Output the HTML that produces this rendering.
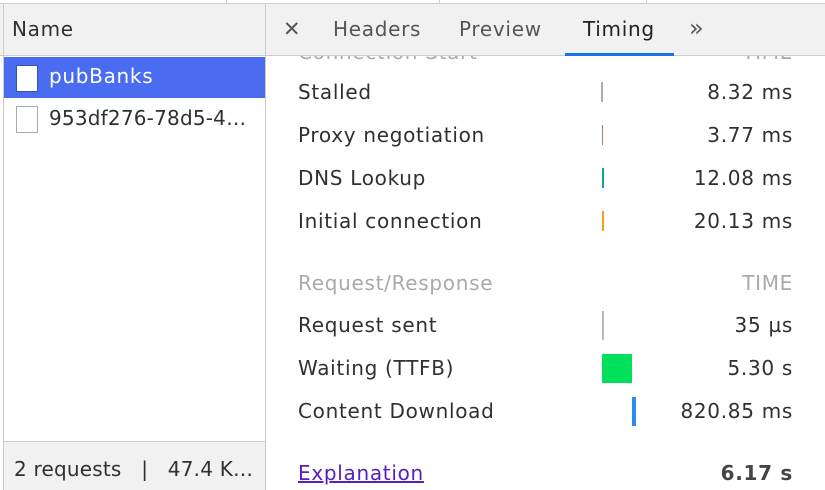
<!DOCTYPE html><html><head><style>
*{margin:0;padding:0;box-sizing:border-box}
body{width:825px;height:490px;overflow:hidden;background:#fff;font-family:"DejaVu Sans","Liberation Sans",sans-serif;font-size:20px;letter-spacing:0.7px;color:#303030;position:relative}
.a{position:absolute;white-space:nowrap}
.r{position:absolute;right:32px;text-align:right;white-space:nowrap}
.bar{position:absolute}
</style></head><body>
<div class="a" style="left:298px;top:40px;color:#aaa">Connection Start</div><div class="r" style="top:40px;color:#aaa">TIME</div>
<div class="a" style="left:0;top:0;width:825px;height:4px;background:#fff;border-bottom:1px solid #ccc"></div>
<div class="a" style="left:226px;top:0;width:1px;height:4px;background:#ccc"></div>
<div class="a" style="left:439px;top:0;width:1px;height:4px;background:#ccc"></div>
<div class="a" style="left:646px;top:0;width:1px;height:4px;background:#ccc"></div>
<div class="a" style="left:0;top:4px;width:825px;height:52px;background:#f1f1f1;border-bottom:1px solid #ccc"></div>
<div class="a" style="left:3px;top:4px;width:1px;height:486px;background:#ccc"></div>
<div class="a" style="left:265px;top:4px;width:1px;height:486px;background:#ccc"></div>
<div class="a" style="left:12px;top:17px">Name</div>
<div class="a" style="left:4px;top:57px;width:261px;height:41px;background:#4a6cf0"></div>
<div class="a" style="left:16px;top:65px;width:22px;height:27px;background:#fff;border:1px solid #3a50b0"></div>
<div class="a" style="left:49px;top:64px;color:#fff">pubBanks</div>
<div class="a" style="left:16px;top:106px;width:22px;height:27px;background:#fff;border:1px solid #aaa"></div>
<div class="a" style="left:49px;top:106px;letter-spacing:0.2px">953df276-78d5-4…</div>
<div class="a" style="left:4px;top:441px;width:261px;height:49px;background:#f1f1f1;border-top:1px solid #ccc"></div>
<div class="a" style="left:14px;top:457px;letter-spacing:0.2px">2 requests &nbsp;&nbsp;| &nbsp;&nbsp;47.4 K…</div>
<div class="a" style="left:283px;top:17px;font-size:21px;color:#555">✕</div>
<div class="a" style="left:333px;top:17px;color:#555">Headers</div>
<div class="a" style="left:459px;top:17px;color:#555">Preview</div>
<div class="a" style="left:583px;top:17px;color:#222">Timing</div>
<div class="a" style="left:565px;top:53px;width:109px;height:3px;background:#1a73e8"></div>
<div class="a" style="left:689px;top:14px;font-size:24px;color:#555">»</div>
<div class="a" style="left:298px;top:80px">Stalled</div><div class="r" style="top:80px">8.32 ms</div>
<div class="bar" style="left:601px;top:82px;width:2px;height:20px;background:#aab"></div>
<div class="a" style="left:298px;top:123px">Proxy negotiation</div><div class="r" style="top:123px">3.77 ms</div>
<div class="bar" style="left:602px;top:125px;width:1px;height:20px;background:#b08070"></div>
<div class="a" style="left:298px;top:166px">DNS Lookup</div><div class="r" style="top:166px">12.08 ms</div>
<div class="bar" style="left:602px;top:168px;width:2px;height:20px;background:#10a0a0"></div>
<div class="a" style="left:298px;top:209px">Initial connection</div><div class="r" style="top:209px">20.13 ms</div>
<div class="bar" style="left:602px;top:211px;width:2px;height:20px;background:#f0a020"></div>
<div class="a" style="left:298px;top:271px;color:#aaa">Request/Response</div><div class="r" style="top:271px;color:#aaa">TIME</div>
<div class="a" style="left:298px;top:313px">Request sent</div><div class="r" style="top:313px">35 µs</div>
<div class="bar" style="left:602px;top:311px;width:2px;height:29px;background:#b0b8c0"></div>
<div class="a" style="left:298px;top:356px">Waiting (TTFB)</div><div class="r" style="top:356px">5.30 s</div>
<div class="bar" style="left:602px;top:354px;width:30px;height:29px;background:#00e05a"></div>
<div class="a" style="left:298px;top:399px">Content Download</div><div class="r" style="top:399px">820.85 ms</div>
<div class="bar" style="left:632px;top:397px;width:4px;height:29px;background:#2a8af0"></div>
<div class="a" style="left:298px;top:461px;color:#5520c0;text-decoration:underline">Explanation</div><div class="r" style="top:461px;font-weight:bold;color:#444">6.17 s</div>
</body></html>
